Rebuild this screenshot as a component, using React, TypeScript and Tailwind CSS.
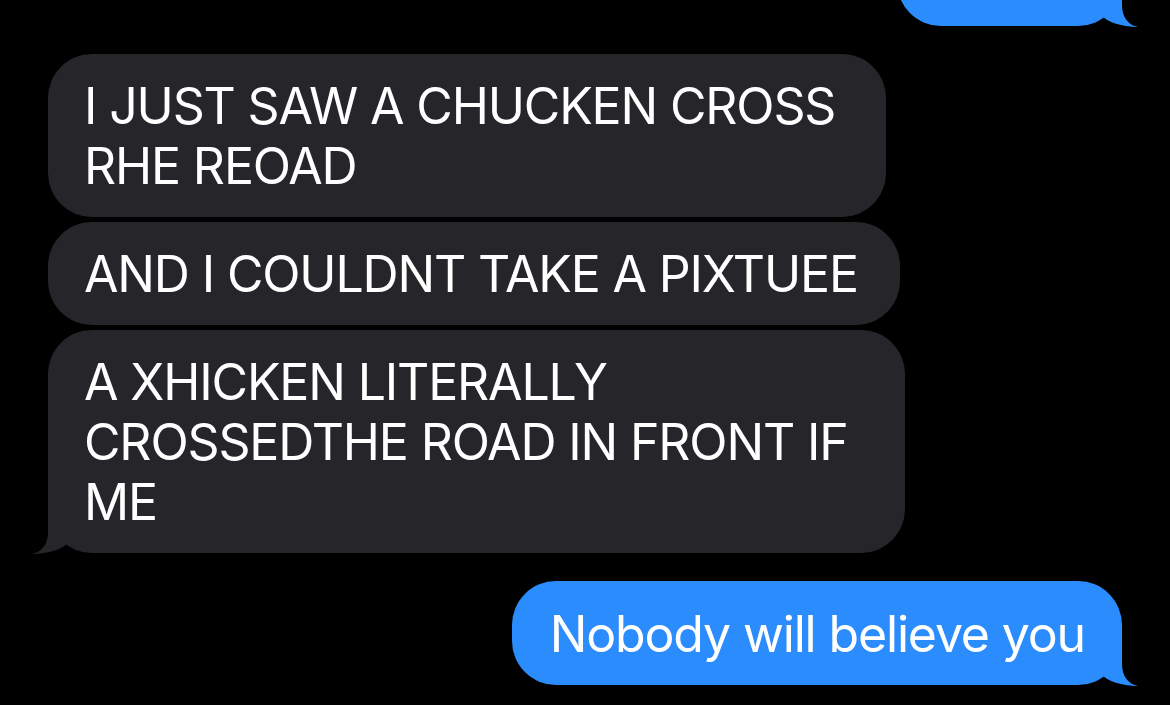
import React from "react";

const BLUE = "#2b8cfe";
const GRAY = "#262529";

function Tail({ side, color }: { side: "left" | "right"; color: string }) {
  // small curled tail at the bottom corner of a bubble
  if (side === "right") {
    return (
      <svg
        className="absolute -right-[16px] -bottom-[1px] h-[50px] w-[40px]"
        viewBox="0 0 40 50"
      >
        <path
          d="M0 0 L24 0 L24 28 C24 40 30 48 40 50 C32 50 14 48 5 40 L0 39 Z"
          fill={color}
        />
      </svg>
    );
  }
  return (
    <svg
      className="absolute -left-[16px] -bottom-[1px] h-[50px] w-[40px]"
      viewBox="0 0 40 50"
    >
      <path
        d="M40 0 L16 0 L16 28 C16 40 10 48 0 50 C8 50 26 48 35 40 L40 39 Z"
        fill={color}
      />
    </svg>
  );
}

function Incoming({
  lines,
  width,
  tail,
}: {
  lines: string[];
  width: string;
  tail?: boolean;
}) {
  return (
    <div
      className={`relative rounded-[44px] bg-[#262529] pl-[36px] pt-[22px] pb-[21px] text-white ${width}`}
    >
      {lines.map((l) => (
        <div key={l} className="whitespace-nowrap">
          {l}
        </div>
      ))}
      {tail && <Tail side="left" color={GRAY} />}
    </div>
  );
}

export default function App() {
  return (
    <div
      className="flex h-[705px] w-[1170px] flex-col overflow-hidden bg-black text-[50px] leading-[60px] tracking-[-1.15px]"
      style={{ fontFamily: "Inter, 'Liberation Sans', sans-serif" }}
    >
      {/* previous sent message, cut off at the top */}
      <div className="relative -mt-[78px] mr-[48px] h-[104px] w-[225px] self-end rounded-[44px] bg-[#2b8cfe]">
        <Tail side="right" color={BLUE} />
      </div>

      {/* received messages */}
      <div className="ml-[48px] mt-[28px] flex flex-col items-start gap-[5px]">
        <Incoming
          width="w-[838px]"
          lines={["I JUST SAW A CHUCKEN CROSS", "RHE REOAD"]}
        />
        <Incoming width="w-[852px]" lines={["AND I COULDNT TAKE A PIXTUEE"]} />
        <Incoming
          width="w-[857px]"
          tail
          lines={["A XHICKEN LITERALLY", "CROSSEDTHE ROAD IN FRONT IF", "ME"]}
        />
      </div>

      {/* sent reply */}
      <div className="relative mr-[48px] mt-[28px] self-end rounded-[44px] bg-[#2b8cfe] pb-[21px] pl-[38px] pr-[37px] pt-[23px] text-white">
        <span className="whitespace-nowrap">Nobody will believe you</span>
        <Tail side="right" color={BLUE} />
      </div>
    </div>
  );
}
